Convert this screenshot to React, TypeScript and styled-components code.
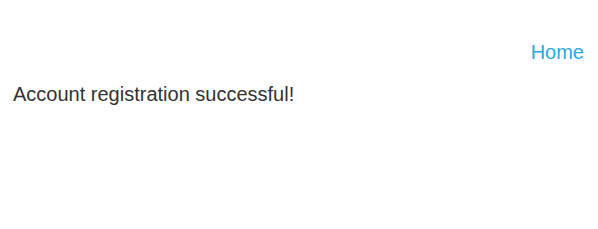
import React from "react";
import styled, { createGlobalStyle } from "styled-components";

const Global = createGlobalStyle`
  html, body { margin: 0; padding: 0; background: #fff; }
  body { font-family: "Liberation Sans", Arial, sans-serif; color: #333; }
`;

const Page = styled.div`
  display: flex;
  flex-direction: column;
  padding: 40px 14px 0 13px;
`;

const Nav = styled.nav`
  display: flex;
  justify-content: flex-end;
`;

const NavLink = styled.a`
  font-size: 20px;
  line-height: 24px;
  color: #29a9e1;
  text-decoration: none;
`;

const Message = styled.p`
  margin: 18px 0 0;
  font-size: 20px;
  line-height: 24px;
  color: #333;
`;

export default function App() {
  return (
    <>
      <Global />
      <Page>
        <Nav>
          <NavLink href="#">Home</NavLink>
        </Nav>
        <Message>Account registration successful!</Message>
      </Page>
    </>
  );
}
